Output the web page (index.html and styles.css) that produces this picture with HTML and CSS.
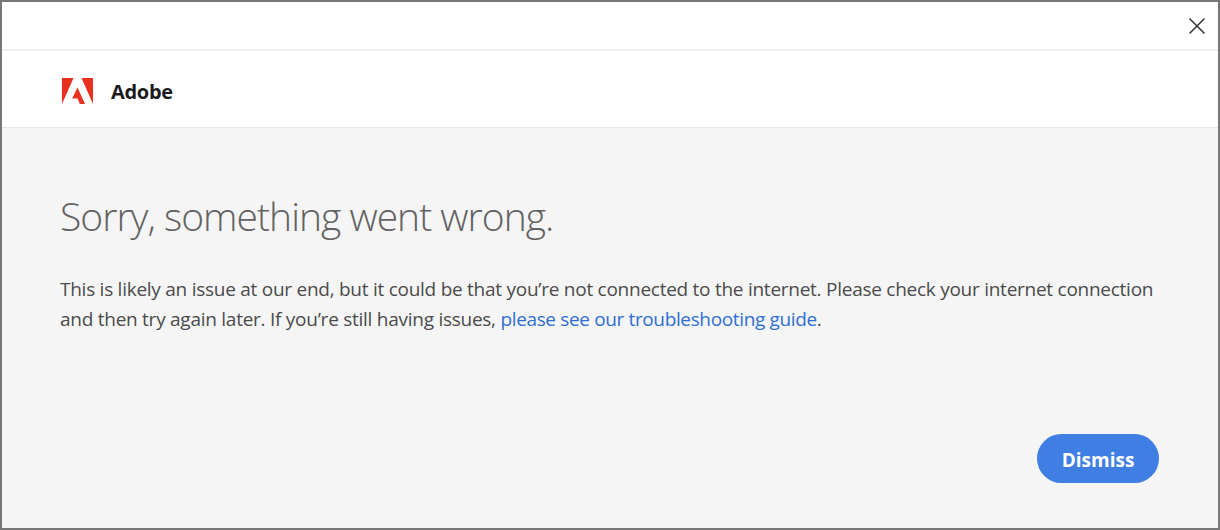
FILE: index.html
```html
<!DOCTYPE html>
<html lang="en">
<head>
    <meta charset="UTF-8">
    <meta name="viewport" content="width=device-width, initial-scale=1.0">
    <title>Adobe</title>
    <link rel="stylesheet" href="styles.css">
</head>
<body>
    <div class="dialog">
        <div class="topbar">
            <button class="close" aria-label="Close">
                <svg width="18" height="18" viewBox="0 0 18 18">
                    <path d="M1.5 1.5 L16.5 16.5 M16.5 1.5 L1.5 16.5" stroke="#333" stroke-width="1.5" fill="none"/>
                </svg>
            </button>
        </div>
        <div class="brand">
            <svg class="logo" width="31" height="26" viewBox="0 0 31 26">
                <path d="M0 0 H11.5 L0 26 Z M31 0 H19.5 L31 26 Z M15.5 9.5 L23 26 H17.8 L15.6 20.6 H10.2 Z" fill="#e8301f"/>
            </svg>
            <span class="brand-name">Adobe</span>
        </div>
        <div class="content">
            <h1 class="title">Sorry, something went wrong.</h1>
            <p class="message">This is likely an issue at our end, but it could be that you’re not connected to the internet. Please check your internet connection and then try again later. If you’re still having issues, <a href="#" class="link">please see our troubleshooting guide</a>.</p>
            <div class="actions">
                <button class="dismiss">Dismiss</button>
            </div>
        </div>
    </div>
</body>
</html>
```

FILE: styles.css
```css
html, body {
    height: 100%;
}

body {
    margin: 0;
    font-family: "Open Sans", "Noto Sans", sans-serif;
}

.dialog {
    display: flex;
    flex-direction: column;
    height: 100%;
    box-sizing: border-box;
    border: 2px solid #777;
    background-color: #fff;
}

.topbar {
    display: flex;
    justify-content: flex-end;
    align-items: center;
    height: 47px;
    flex-shrink: 0;
    padding-right: 12px;
    border-bottom: 2px solid #f0f0f0;
}

.close {
    display: flex;
    padding: 0;
    border: none;
    background: none;
    cursor: pointer;
}

.brand {
    display: flex;
    align-items: center;
    gap: 18px;
    height: 77px;
    box-sizing: border-box;
    flex-shrink: 0;
    padding: 4px 0 0 60px;
    border-bottom: 1px solid #e6e6e6;
}

.brand-name {
    font-size: 20px;
    font-weight: 700;
    letter-spacing: -0.3px;
    color: #1b1b1b;
}

.content {
    display: flex;
    flex-direction: column;
    flex: 1;
    padding: 63px 59px 45px 58px;
    background-color: #f5f5f5;
}

.title {
    margin: 0;
    font-size: 39px;
    line-height: 50px;
    font-weight: 300;
    letter-spacing: -0.98px;
    color: #626262;
}

.message {
    margin: 33px 0 0;
    font-size: 19px;
    line-height: 30px;
    color: #4b4b4b;
    letter-spacing: -0.26px;
}

.link {
    color: #2f6fd4;
    letter-spacing: -0.36px;
    text-decoration: none;
}

.actions {
    display: flex;
    justify-content: flex-end;
    margin-top: auto;
}

.dismiss {
    width: 122px;
    height: 49px;
    padding: 2px 0 0;
    border: none;
    border-radius: 25px;
    background-color: #3f7fe3;
    color: #fff;
    font-family: inherit;
    font-size: 19px;
    font-weight: 700;
    cursor: pointer;
}
```
